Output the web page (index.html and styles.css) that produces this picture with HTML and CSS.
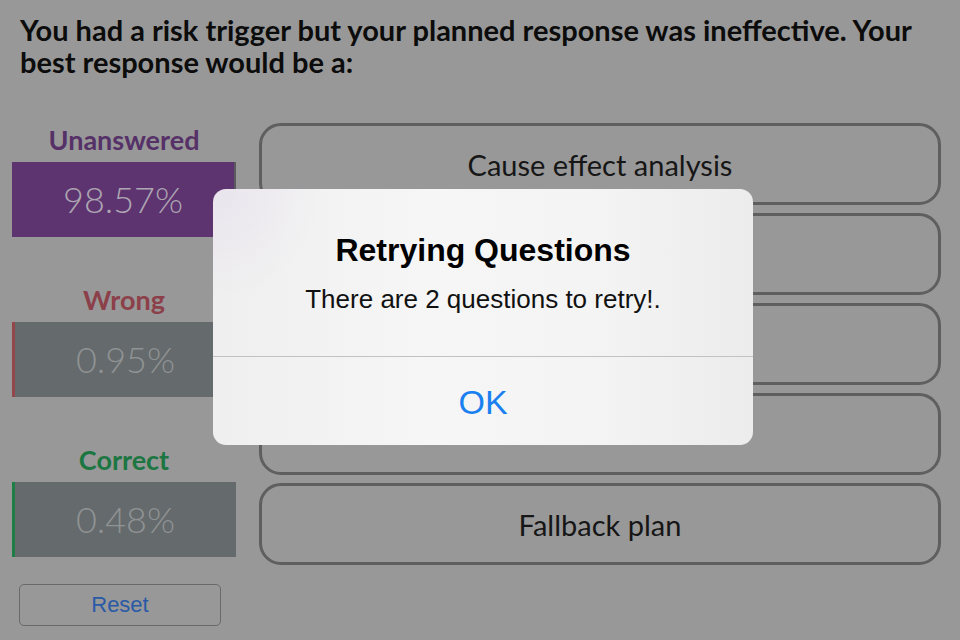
FILE: index.html
```html
<!DOCTYPE html>
<html>
<head>
<meta charset="utf-8">
<link rel="stylesheet" href="styles.css">
</head>
<body>
<div class="screen">
  <h1 class="question">You had a risk trigger but your planned response was ineffective. Your best response would be a:</h1>
  <div class="main">
    <div class="stats">
      <div class="stat">
        <div class="stat-label unanswered">Unanswered</div>
        <div class="stat-box box-unanswered">98.57%</div>
      </div>
      <div class="stat">
        <div class="stat-label wrong">Wrong</div>
        <div class="stat-box box-wrong">0.95%</div>
      </div>
      <div class="stat">
        <div class="stat-label correct">Correct</div>
        <div class="stat-box box-correct">0.48%</div>
      </div>
      <div class="reset">Reset</div>
    </div>
    <div class="answers">
      <div class="answer">Cause effect analysis</div>
      <div class="answer"></div>
      <div class="answer"></div>
      <div class="answer"></div>
      <div class="answer">Fallback plan</div>
    </div>
  </div>
  <div class="alert">
    <div class="alert-body">
      <div class="alert-title">Retrying Questions</div>
      <div class="alert-msg">There are 2 questions to retry!.</div>
    </div>
    <div class="alert-btn">OK</div>
  </div>
</div>
</body>
</html>
```
FILE: styles.css
```css
html, body {
  margin: 0;
  padding: 0;
}
body {
  background: #989898;
  width: 960px;
  height: 640px;
  overflow: hidden;
}
.screen {
  position: relative;
  width: 960px;
  height: 640px;
  font-family: "Lato", "Open Sans", sans-serif;
}
.question {
  margin: 0;
  padding: 14px 20px 0 20px;
  font-size: 29px;
  line-height: 32px;
  font-weight: 700;
  color: #0c0c0c;
  height: 94px;
  box-sizing: content-box;
}
.main {
  display: flex;
  padding-top: 14px;
}
.stats {
  width: 224px;
  margin-left: 12px;
  display: flex;
  flex-direction: column;
  gap: 45px;
}
.stat-label {
  height: 40px;
  line-height: 36px;
  text-align: center;
  font-size: 27px;
  font-weight: 700;
}
.unanswered { color: #563168; }
.wrong { color: #8c404a; }
.correct { color: #1c7642; }
.stat-box {
  height: 75px;
  line-height: 75px;
  text-align: center;
  font-size: 36px;
  font-weight: 300;
  color: #ada6b2;
  box-sizing: border-box;
}
.box-unanswered {
  background: #5d3470;
  border-right: 2px solid #5a5a5e;
}
.box-wrong {
  background: #656a6c;
  border-left: 3px solid #93474b;
  color: #8f9394;
}
.box-correct {
  background: #656a6c;
  border-left: 3px solid #1f7d46;
  color: #8f9394;
}
.reset {
  margin: -18px 0 0 7px;
  width: 202px;
  height: 42px;
  box-sizing: border-box;
  border: 1px solid #6a6a6a;
  border-radius: 5px;
  text-align: center;
  line-height: 40px;
  font-family: "Liberation Sans", Arial, sans-serif;
  font-size: 22px;
  color: #2a5aa6;
}
.answers {
  margin-left: 23px;
  width: 682px;
  display: flex;
  flex-direction: column;
  gap: 8px;
  margin-top: 1px;
}
.answer {
  height: 82px;
  box-sizing: border-box;
  border: 3px solid #5f5f5f;
  border-radius: 22px;
  display: flex;
  align-items: center;
  justify-content: center;
  font-size: 29px;
  color: #161616;
}
.alert {
  position: absolute;
  left: 213px;
  top: 189px;
  width: 540px;
  height: 256px;
  border-radius: 13px;
  background:
    radial-gradient(circle at 0 0, rgba(228, 218, 236, 0.5), rgba(240, 240, 242, 0) 110px),
    linear-gradient(90deg, #efefef, #f6f6f6 40%, #f4f4f4 70%, #ececec);
  display: flex;
  flex-direction: column;
  font-family: "Liberation Sans", Arial, sans-serif;
  overflow: hidden;
}
.alert-body {
  height: 167px;
  border-bottom: 1px solid #c2c2c2;
  text-align: center;
}
.alert-title {
  padding-top: 42px;
  font-size: 32px;
  font-weight: 700;
  line-height: 38px;
  color: #000;
}
.alert-msg {
  margin-top: 16px;
  font-size: 26px;
  line-height: 28px;
  color: #111;
}
.alert-btn {
  flex: 1;
  display: flex;
  align-items: center;
  justify-content: center;
  font-size: 34px;
  color: #1a80f0;
  padding-top: 2px;
}
```
